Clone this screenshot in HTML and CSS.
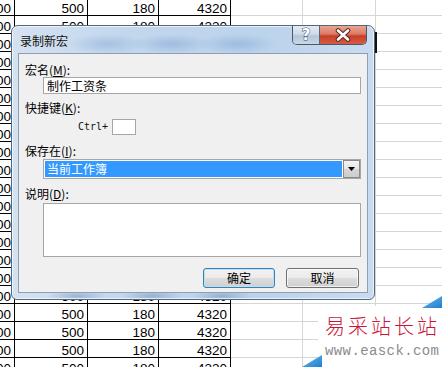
FILE: index.html
```html
<!DOCTYPE html>
<html lang="zh-CN">
<head>
<meta charset="utf-8">
<title>录制新宏</title>
<link rel="stylesheet" href="styles.css">
</head>
<body>
<div class="sheet">
  <div class="row"><div class="c k">2000</div><div class="c k">500</div><div class="c k">180</div><div class="c k">4320</div><div class="c g"></div><div class="c g"></div><div class="c g"></div></div>
  <div class="row"><div class="c k">2000</div><div class="c k">500</div><div class="c k">180</div><div class="c k">4320</div><div class="c g"></div><div class="c g"></div><div class="c g"></div></div>
  <div class="row"><div class="c k">2000</div><div class="c k"></div><div class="c k"></div><div class="c k"></div><div class="c g"></div><div class="c g"></div><div class="c g"></div></div>
  <div class="row"><div class="c k">2000</div><div class="c k"></div><div class="c k"></div><div class="c k"></div><div class="c g"></div><div class="c g"></div><div class="c g"></div></div>
  <div class="row"><div class="c k">2000</div><div class="c k"></div><div class="c k"></div><div class="c k"></div><div class="c g"></div><div class="c g"></div><div class="c g"></div></div>
  <div class="row"><div class="c k">2000</div><div class="c k"></div><div class="c k"></div><div class="c k"></div><div class="c g"></div><div class="c g"></div><div class="c g"></div></div>
  <div class="row"><div class="c k">2000</div><div class="c k"></div><div class="c k"></div><div class="c k"></div><div class="c g"></div><div class="c g"></div><div class="c g"></div></div>
  <div class="row"><div class="c k">2000</div><div class="c k"></div><div class="c k"></div><div class="c k"></div><div class="c g"></div><div class="c g"></div><div class="c g"></div></div>
  <div class="row"><div class="c k">2000</div><div class="c k"></div><div class="c k"></div><div class="c k"></div><div class="c g"></div><div class="c g"></div><div class="c g"></div></div>
  <div class="row"><div class="c k">2000</div><div class="c k"></div><div class="c k"></div><div class="c k"></div><div class="c g"></div><div class="c g"></div><div class="c g"></div></div>
  <div class="row"><div class="c k">2000</div><div class="c k"></div><div class="c k"></div><div class="c k"></div><div class="c g"></div><div class="c g"></div><div class="c g"></div></div>
  <div class="row"><div class="c k">2000</div><div class="c k"></div><div class="c k"></div><div class="c k"></div><div class="c g"></div><div class="c g"></div><div class="c g"></div></div>
  <div class="row"><div class="c k">2000</div><div class="c k"></div><div class="c k"></div><div class="c k"></div><div class="c g"></div><div class="c g"></div><div class="c g"></div></div>
  <div class="row"><div class="c k">2000</div><div class="c k"></div><div class="c k"></div><div class="c k"></div><div class="c g"></div><div class="c g"></div><div class="c g"></div></div>
  <div class="row"><div class="c k">2000</div><div class="c k"></div><div class="c k"></div><div class="c k"></div><div class="c g"></div><div class="c g"></div><div class="c g"></div></div>
  <div class="row"><div class="c k">2000</div><div class="c k"></div><div class="c k"></div><div class="c k"></div><div class="c g"></div><div class="c g"></div><div class="c g"></div></div>
  <div class="row"><div class="c k">2000</div><div class="c k">500</div><div class="c k">180</div><div class="c k">4320</div><div class="c g"></div><div class="c g"></div><div class="c g"></div></div>
  <div class="row"><div class="c k">2000</div><div class="c k">500</div><div class="c k">180</div><div class="c k">4320</div><div class="c g"></div><div class="c g"></div><div class="c g"></div></div>
  <div class="row"><div class="c k">2000</div><div class="c k">500</div><div class="c k">180</div><div class="c k">4320</div><div class="c g"></div><div class="c g"></div><div class="c g"></div></div>
  <div class="row"><div class="c k">2000</div><div class="c k">500</div><div class="c k">180</div><div class="c k">4320</div><div class="c g"></div><div class="c g"></div><div class="c g"></div></div>
  <div class="row"><div class="c k">2000</div><div class="c k">500</div><div class="c k">180</div><div class="c k">4320</div><div class="c g"></div><div class="c g"></div><div class="c g"></div></div>
</div>

<div class="selmark"></div>

<div class="dialog">
  <div class="titlebar">
    <span class="title">录制新宏</span>
    <div class="capbtns">
      <div class="cap help"><span class="qmark">?</span></div>
      <div class="cap close">
        <svg width="18" height="14" viewBox="0 0 18 14">
          <path d="M4 2.5 L14 11.5 M14 2.5 L4 11.5" stroke="#5a2a22" stroke-width="4.6" stroke-linecap="round"/>
          <path d="M4 2.5 L14 11.5 M14 2.5 L4 11.5" stroke="#ffffff" stroke-width="2.6" stroke-linecap="round"/>
        </svg>
      </div>
    </div>
  </div>
  <div class="client">
    <div class="label">宏名(<u>M</u>):</div>
    <div class="field">制作工资条</div>
    <div class="label l2">快捷键(<u>K</u>):</div>
    <div class="ctrlrow"><span class="ctrl">Ctrl+</span><span class="keybox"></span></div>
    <div class="label l3">保存在(<u>I</u>):</div>
    <div class="select">
      <div class="selected">当前工作簿</div>
      <div class="drop"><svg width="7" height="4" viewBox="0 0 7 4"><path d="M0 0 H7 L3.5 4 Z" fill="#000"/></svg></div>
    </div>
    <div class="label l4">说明(<u>D</u>):</div>
    <div class="memo"></div>
    <div class="buttons">
      <div class="btn default">确定</div>
      <div class="btn">取消</div>
    </div>
  </div>
</div>

<div class="watermark">
  <div class="tri tr"></div>
  <div class="tri bl"></div>
  <div class="wm-cn">易采站长站</div>
  <div class="wm-en">www.easck.com</div>
</div>
</body>
</html>
```

FILE: styles.css
```css
html, body {
  margin: 0;
  padding: 0;
  width: 442px;
  height: 367px;
  overflow: hidden;
  background: #ffffff;
}

.sheet {
  margin-left: -58px;
  margin-top: -2px;
  display: flex;
  flex-direction: column;
}

.row {
  display: grid;
  grid-template-columns: 73px 73px 71px 72px 72px 73px 73px;
  height: 18px;
}

.c {
  box-sizing: border-box;
  height: 18px;
  padding: 3px 3px 0 0;
  text-align: right;
  font-family: "Liberation Sans", Arial, sans-serif;
  font-size: 13.5px;
  line-height: 15px;
  color: #000;
  overflow: hidden;
  white-space: nowrap;
}

.c.k {
  border-right: 1px solid #000;
  border-bottom: 1px solid #000;
}

.c.g {
  border-right: 1px solid #d6d6d6;
  border-bottom: 1px solid #d6d6d6;
}

.selmark {
  position: absolute;
  left: 375px;
  top: 32px;
  width: 2px;
  height: 21px;
  background: #111;
}

/* dialog */
.dialog {
  position: absolute;
  left: 11px;
  top: 25px;
  width: 364px;
  height: 275px;
  box-sizing: border-box;
  border: 1px solid #55667a;
  border-radius: 7px 7px 6px 6px;
  background:
    radial-gradient(ellipse 40px 10px at 95px 18px, rgba(140,175,215,0.55), rgba(140,175,215,0)),
    radial-gradient(ellipse 40px 10px at 160px 18px, rgba(130,168,212,0.55), rgba(130,168,212,0)),
    radial-gradient(ellipse 40px 10px at 225px 18px, rgba(130,168,212,0.55), rgba(130,168,212,0)),
    radial-gradient(ellipse 30px 6px at 65px 270px, rgba(110,140,180,0.5), rgba(110,140,180,0)),
    radial-gradient(ellipse 30px 6px at 140px 270px, rgba(110,140,180,0.5), rgba(110,140,180,0)),
    radial-gradient(ellipse 30px 6px at 210px 270px, rgba(110,140,180,0.5), rgba(110,140,180,0)),
    linear-gradient(to right, #d5e2f0 0%, #c3d7ee 30%, #bcd3ec 70%, #c9dbef 100%);
  box-shadow: inset 0 0 0 1px rgba(255,255,255,0.65);
  display: flex;
  flex-direction: column;
  padding: 0 6px 6px 6px;
}

.titlebar {
  position: relative;
  height: 27px;
  flex: none;
}

.title {
  display: block;
  padding: 8px 0 0 2px;
  font-family: "Noto Sans CJK SC", "Noto Sans", sans-serif;
  font-size: 12px;
  line-height: 14px;
  color: #111;
}

.capbtns {
  position: absolute;
  top: 0;
  right: 1px;
  display: flex;
  height: 18px;
  border: 1px solid #4d5866;
  border-top: none;
  border-radius: 0 0 5px 5px;
  overflow: hidden;
}

.cap {
  display: flex;
  align-items: center;
  justify-content: center;
  height: 18px;
}

.help {
  width: 26px;
  background: linear-gradient(to bottom, #e3ebf4 0%, #cfdbe9 45%, #b3c5db 55%, #c9d8ea 100%);
  border-right: 1px solid #5c6672;
}

.qmark {
  font-family: "DejaVu Sans", sans-serif;
  font-weight: bold;
  font-size: 15px;
  line-height: 16px;
  color: #fff;
  -webkit-text-stroke: 1px #4a525e;
  paint-order: stroke fill;
}

.close {
  width: 46px;
  background: linear-gradient(to bottom, #eaa594 0%, #dc7a64 45%, #c73e28 55%, #d65c45 100%);
}

.client {
  flex: 1;
  box-sizing: border-box;
  background: #f0f0f0;
  border: 1px solid #8e9fb3;
  padding: 9px 0 0 6px;
  display: flex;
  flex-direction: column;
  font-family: "Noto Sans CJK SC", "Noto Sans", sans-serif;
  font-size: 12px;
  color: #000;
}

.label {
  line-height: 14px;
  height: 14px;
}

.label u {
  text-underline-offset: 1px;
}

.l2 { margin-top: 7px; }
.l3 { margin-top: 9px; }
.l4 { margin-top: 8px; }

.field {
  margin-left: 18px;
  width: 318px;
  height: 17px;
  box-sizing: border-box;
  background: #fff;
  border: 1px solid #a6a6a6;
  padding: 0 0 0 3px;
  line-height: 15px;
}

.ctrlrow {
  margin-top: 4px;
  margin-left: 53px;
  display: flex;
  align-items: center;
  gap: 4px;
  height: 16px;
}

.ctrl {
  font-family: "DejaVu Sans Mono", "Liberation Mono", monospace;
  font-size: 10px;
  line-height: 12px;
  color: #111;
}

.keybox {
  width: 24px;
  height: 16px;
  box-sizing: border-box;
  background: #fff;
  border: 1px solid #a6a6a6;
}

.select {
  margin-top: 1px;
  margin-left: 18px;
  width: 318px;
  height: 20px;
  box-sizing: border-box;
  background: #fff;
  border: 1px solid #a6a6a6;
  display: flex;
  align-items: center;
  padding: 1px 0 1px 1px;
}

.selected {
  width: 297px;
  height: 16px;
  background: #3399ff;
  color: #fff;
  line-height: 16px;
  padding-left: 2px;
  box-sizing: border-box;
}

.drop {
  margin-left: 1px;
  width: 17px;
  height: 18px;
  box-sizing: border-box;
  border: 1px solid #8a8a8a;
  background: linear-gradient(to bottom, #f4f4f4 0%, #e6e6e6 50%, #d6d6d6 51%, #cdcdcd 100%);
  display: flex;
  align-items: center;
  justify-content: center;
}

.memo {
  margin-top: 2px;
  margin-left: 18px;
  width: 318px;
  height: 54px;
  box-sizing: border-box;
  background: #fff;
  border: 1px solid #a6a6a6;
}

.buttons {
  margin-top: 11px;
  margin-left: 178px;
  display: flex;
  gap: 11px;
}

.btn {
  width: 73px;
  height: 20px;
  box-sizing: border-box;
  border: 1px solid #707070;
  border-radius: 3px;
  background: linear-gradient(to bottom, #f2f2f2 0%, #ebebeb 48%, #dddddd 52%, #cfcfcf 100%);
  box-shadow: inset 0 0 0 1px rgba(255,255,255,0.7);
  text-align: center;
  line-height: 18px;
  font-size: 12px;
}

.btn.default {
  border-color: #3c7fb1;
  box-shadow: inset 0 0 0 1px #b8e2f8;
  width: 72px;
}

/* watermark */
.watermark {
  position: absolute;
  left: 318px;
  top: 306px;
  width: 124px;
  height: 61px;
  background: #fff;
  display: flex;
  flex-direction: column;
  align-items: flex-start;
  padding-left: 7px;
  box-sizing: border-box;
}

.tri {
  position: absolute;
  width: 20px;
  height: 12px;
  background: linear-gradient(to bottom right, #6fb8ee, #1f7fcf);
  clip-path: polygon(100% 0, 100% 100%, 0 100%);
}

.tri.tr {
  right: 0;
  top: -10px;
}

.tri.bl {
  left: -16px;
  bottom: 0;
}

.wm-cn {
  margin-top: 8px;
  font-family: "Noto Sans CJK SC", sans-serif;
  font-size: 20px;
  font-weight: 300;
  line-height: 24px;
  letter-spacing: 3px;
  color: #c9143a;
  white-space: nowrap;
}

.wm-en {
  margin-top: 6px;
  font-family: "Liberation Mono", monospace;
  font-size: 14px;
  line-height: 14px;
  letter-spacing: 0.4px;
  color: #8c8c8c;
  white-space: nowrap;
}
```
